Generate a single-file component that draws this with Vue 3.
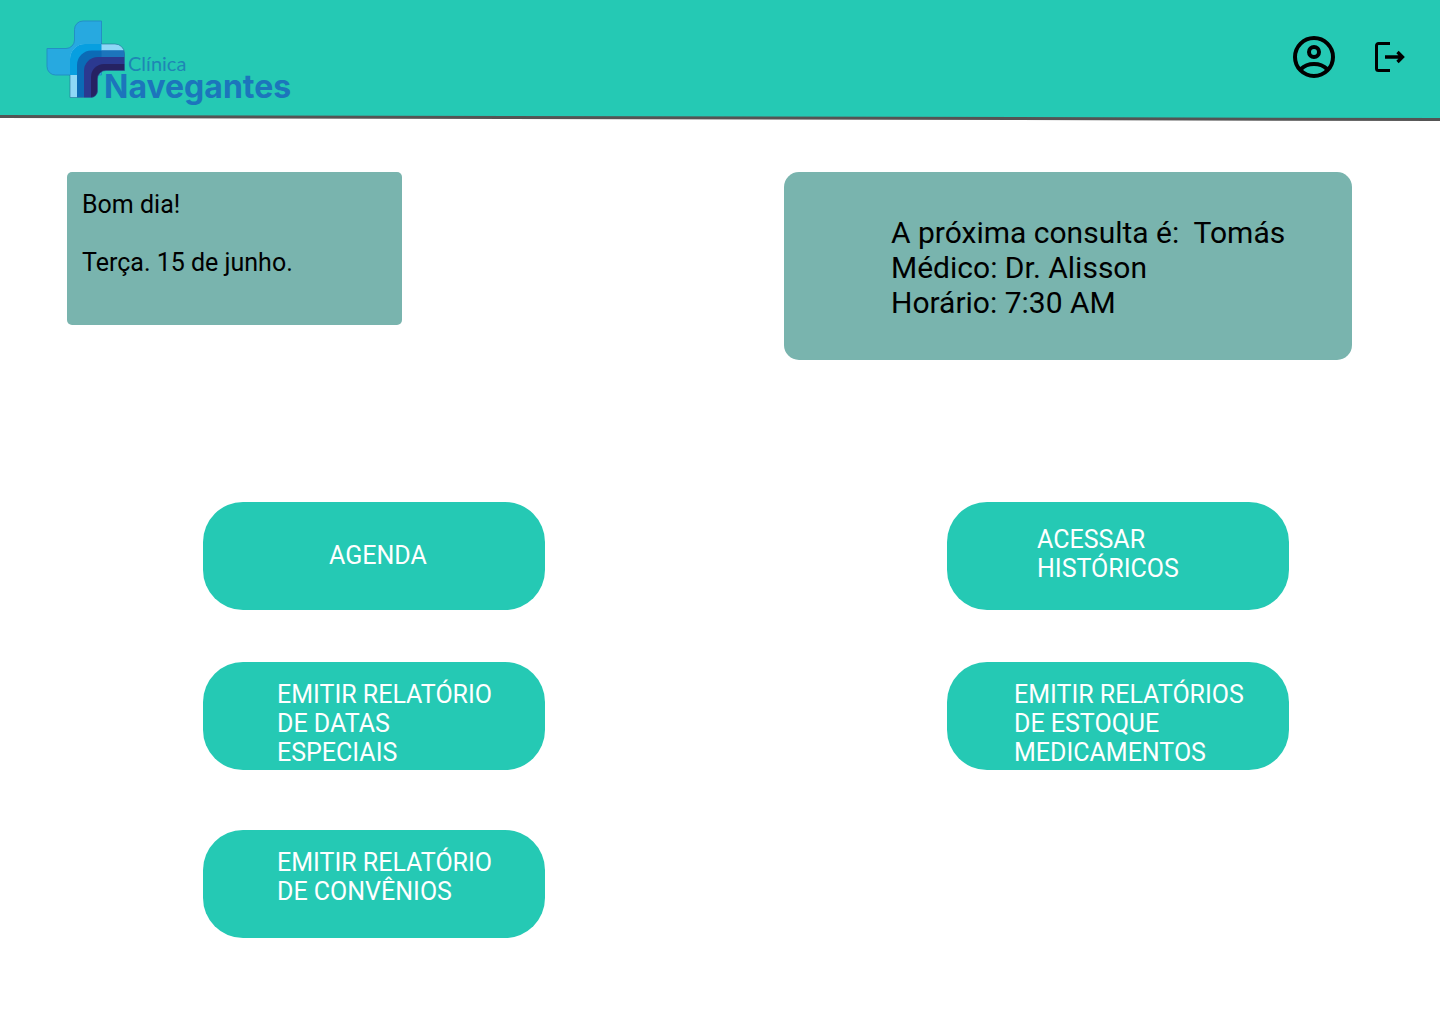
<script setup>
const reportActions = [
  { label: ['AGENDA'], layout: 'single' },
  { label: ['EMITIR RELATÓRIO', 'DE DATAS', 'ESPECIAIS'], layout: 'report' },
  { label: ['EMITIR RELATÓRIO', 'DE CONVÊNIOS'], layout: 'report last' },
]

const recordActions = [
  { label: ['ACESSAR', 'HISTÓRICOS'], layout: 'history' },
  { label: ['EMITIR RELATÓRIOS', 'DE ESTOQUE', 'MEDICAMENTOS'], layout: 'stock' },
]
</script>

<template>
  <div class="page">
    <header>
      <div class="bar">
        <a href="#" class="logo" aria-label="Clínica Navegantes">
          <svg width="260" height="100" viewBox="40 7 260 100">
            <defs>
              <clipPath id="bands">
                <path d="M70 97.500V59A15 15 0 0 1 85 44H115A9.500 9.500 0 0 1 124.500 53.500V70.500H106A8.500 8.500 0 0 0 97.500 79V91A6.500 6.500 0 0 1 91 97.500Z" />
              </clipPath>
              <clipPath id="cross">
                <path d="M83 21H101.500V75H55.500A8.500 8.500 0 0 1 47 66.500V48.500H66A8.500 8.500 0 0 0 74.500 40V29.500A8.500 8.500 0 0 1 83 21Z" />
              </clipPath>
            </defs>
            <path d="M83 21H101.500V75H55.500A8.500 8.500 0 0 1 47 66.500V48.500H66A8.500 8.500 0 0 0 74.500 40V29.500A8.500 8.500 0 0 1 83 21Z" fill="#27a9e0" stroke="#238fc4" />
            <g clip-path="url(#bands)">
              <path d="M70 44H125V98H70Z" fill="#8ed8f6" />
              <path d="M70 44H125V98H70Z" fill="#079fe0" clip-path="url(#cross)" />
              <path d="M77 98V65A14.500 14.500 0 0 1 91.500 50.500H125V98Z" fill="#0b6bb6" />
              <path d="M101.500 50.500H125V57H101.500Z" fill="#1c75bc" />
              <path d="M84 98V71A14 14 0 0 1 98 57H125V98Z" fill="#2b3990" />
              <path d="M91 98V77A13 13 0 0 1 104 64H125V98Z" fill="#262262" />
            </g>
            <path d="M101.500 44H115A9.500 9.500 0 0 1 124.500 53.500V70.500H106A8.500 8.500 0 0 0 97.500 79V91A6.500 6.500 0 0 1 91 97.500H70V75" fill="none" stroke="#236f98" stroke-opacity=".6" />
            <text x="128" y="71" class="logo-small">Clínica</text>
            <text x="104" y="98" class="logo-name">Navegantes</text>
          </svg>
        </a>
        <nav>
          <button type="button" class="icon" aria-label="Perfil">
            <svg width="42" height="42" viewBox="0 0 42 42" fill="none" stroke="#000" stroke-width="4">
              <circle cx="21" cy="21" r="19" />
              <circle cx="21" cy="16" r="5" />
              <path d="M8 33Q13 28 21 28T34 33" />
            </svg>
          </button>
          <button type="button" class="icon" aria-label="Sair">
            <svg width="30" height="30" viewBox="0 0 30 30" fill="none" stroke="#000">
              <path d="M15 1.500H3.500A2 2 0 0 0 1.500 3.500V26.500A2 2 0 0 0 3.500 28.500H15" stroke-width="3" />
              <path d="M10 15H28M22.500 10L27.500 15L22.500 20" stroke-width="3.300" />
            </svg>
          </button>
        </nav>
      </div>
      <svg class="rule" viewBox="0 0 1440 6" preserveAspectRatio="none" aria-hidden="true">
        <path d="M0 0H1440V4L0 1Z" fill="#25c9b4" />
        <path d="M0 0L1440 3V6L0 3Z" fill="#545454" />
      </svg>
    </header>

    <main>
      <section class="summary">
        <div class="card greeting">
          <p>Bom dia!</p>
          <p>Terça. 15 de junho.</p>
        </div>
        <div class="card next">
          <p>A próxima consulta é:&nbsp; Tomás</p>
          <p>Médico: Dr. Alisson</p>
          <p>Horário: 7:30 AM</p>
        </div>
      </section>

      <section class="actions">
        <div class="column">
          <button v-for="action in reportActions" :key="action.label.join()" type="button" class="action" :class="action.layout">
            <span v-for="line in action.label" :key="line">{{ line }}</span>
          </button>
        </div>
        <div class="column">
          <button v-for="action in recordActions" :key="action.label.join()" type="button" class="action" :class="action.layout">
            <span v-for="line in action.label" :key="line">{{ line }}</span>
          </button>
        </div>
      </section>
    </main>
  </div>
</template>

<style>
body {
  margin: 0;
  background: #fff;
}
</style>

<style scoped>
.page {
  font-family: Roboto, sans-serif;
  font-size: 25px;
  line-height: 29px;
  color: #000;
}
.bar {
  display: flex;
  justify-content: space-between;
  align-items: center;
  padding: 7px 35px 8px 40px;
  background: #25c9b4;
}
.logo,
.logo svg,
.icon svg,
.rule {
  display: block;
}
.logo-small {
  font-family: Lato, sans-serif;
  font-size: 20px;
  font-weight: 400;
  fill: #1e86b4;
}
.logo-name {
  font-family: Inter, sans-serif;
  font-size: 32px;
  font-weight: 700;
  fill: #1c75bc;
}
nav {
  display: flex;
  align-items: center;
  gap: 40px;
}
.icon {
  padding: 0;
  border: 0;
  background: none;
  cursor: pointer;
}
.rule {
  width: 100%;
  height: 6px;
}
main {
  padding: 51px 0 80px;
}
.summary {
  display: flex;
  justify-content: space-between;
  align-items: flex-start;
  padding: 0 88px 0 67px;
}
.card {
  box-sizing: border-box;
  background: #79b4ae;
}
.card p {
  margin: 0;
}
.greeting {
  display: flex;
  flex-direction: column;
  gap: 29px;
  width: 335px;
  min-height: 153px;
  padding: 18px 15px;
  border-radius: 5px;
}
.next {
  width: 568px;
  min-height: 188px;
  padding: 43px 24px 40px 107px;
  border-radius: 15px;
  font-size: 30px;
  line-height: 35px;
}
.actions {
  display: flex;
  justify-content: space-between;
  padding: 142px 151px 0 203px;
}
.column {
  display: flex;
  flex-direction: column;
  gap: 52px;
}
.action {
  display: flex;
  flex-direction: column;
  align-items: flex-start;
  justify-content: flex-start;
  box-sizing: border-box;
  width: 342px;
  min-height: 108px;
  padding: 18px 0 0 74px;
  border: 0;
  border-radius: 40px;
  background: #25c9b4;
  color: #fff;
  font: inherit;
  text-align: left;
  white-space: nowrap;
  cursor: pointer;
}
.single {
  padding: 39px 0 0 126px;
}
.history {
  padding: 23px 0 0 90px;
}
.stock {
  padding-left: 67px;
}
.last {
  margin-top: 8px;
}
</style>
